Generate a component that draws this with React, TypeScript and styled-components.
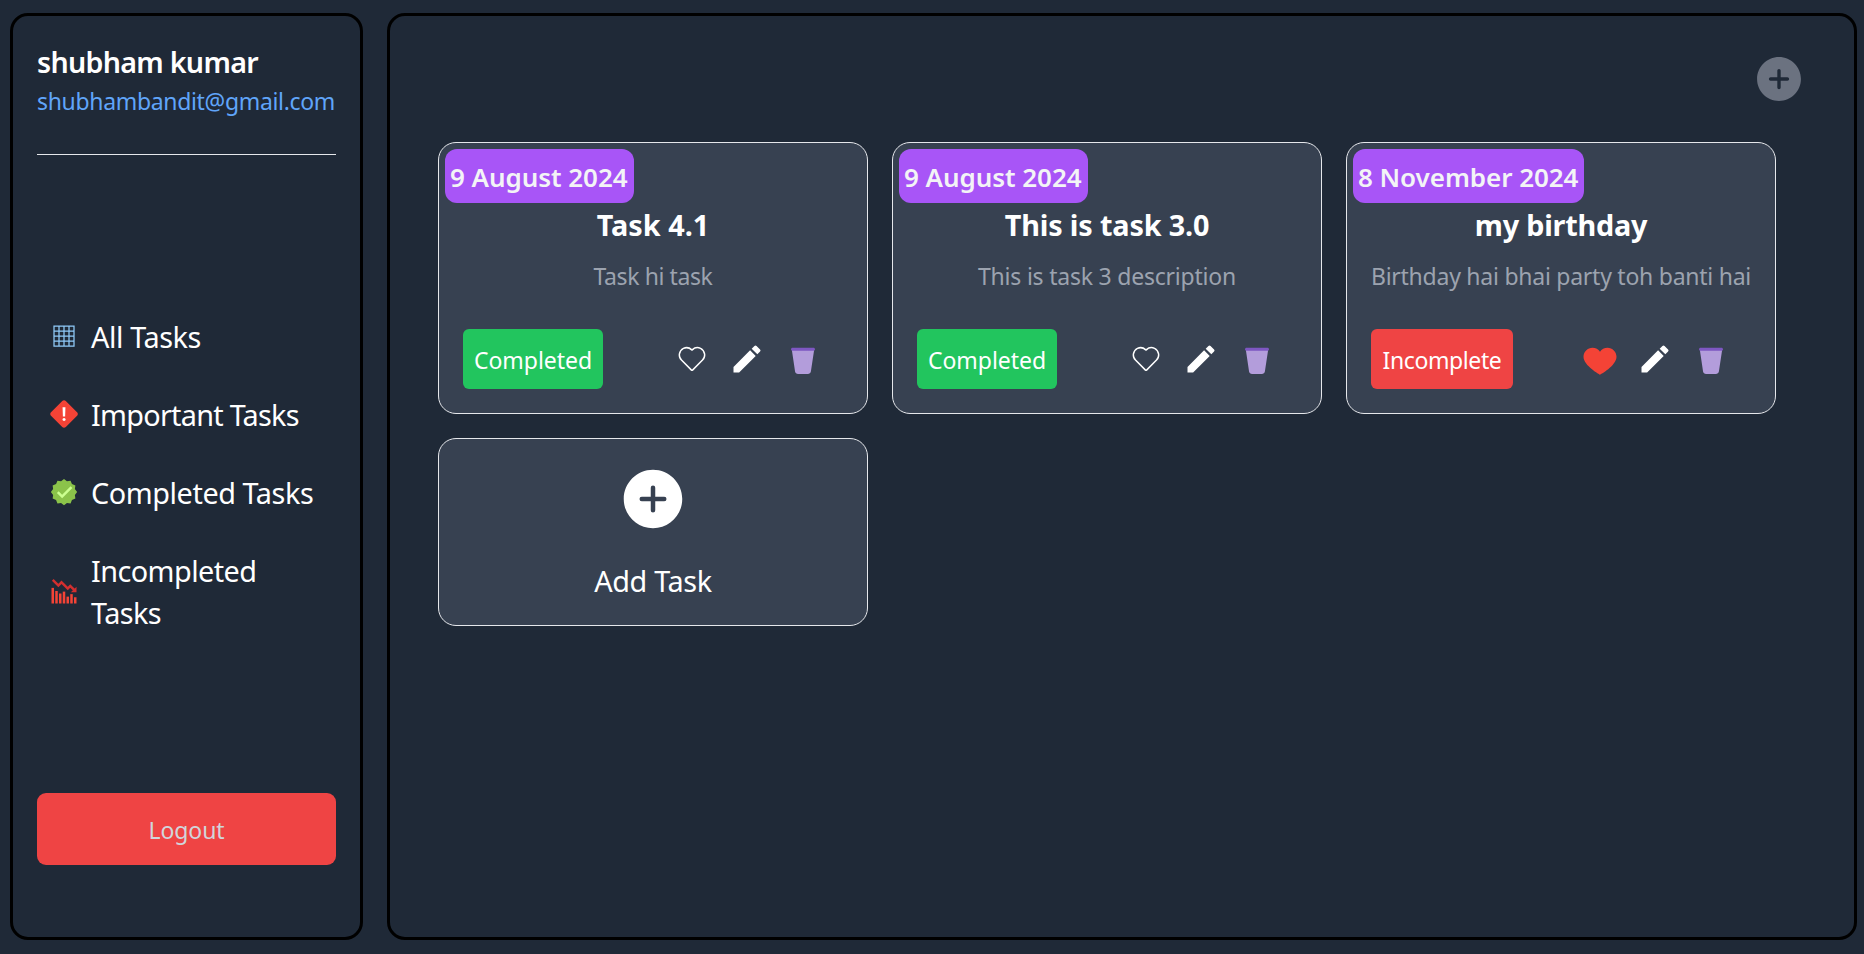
import React from "react";
import styled, { createGlobalStyle } from "styled-components";
import type { IconType } from "react-icons";
import { FcApproval, FcBearish, FcEmptyTrash, FcGrid, FcHighPriority, FcLike } from "react-icons/fc";
import { CiHeart } from "react-icons/ci";
import { MdEdit } from "react-icons/md";
import { IoAddCircle } from "react-icons/io5";

const GlobalStyle = createGlobalStyle`
  *, *::before, *::after { box-sizing: border-box; }
  body {
    margin: 0;
    background: #1f2937;
    color: #ffffff;
    font-family: "Segoe UI", "Noto Sans", sans-serif;
  }
  h1, h2, p { margin: 0; }
  button { font: inherit; color: inherit; border: 0; background: none; padding: 0; cursor: pointer; }
  svg { display: block; flex-shrink: 0; }
`;

const Page = styled.div`
  display: flex;
  gap: 24px;
  height: 954px;
  padding: 13px 7px 14px 10px;
`;

const Panel = styled.section`
  border: 3px solid #000000;
  border-radius: 18px;
`;

const Sidebar = styled(Panel)`
  display: flex;
  flex-direction: column;
  flex: none;
  width: 353px;
  padding: 24px 24px 72px;
`;

const UserName = styled.h1`
  font-size: 28.6px;
  font-weight: 600;
  line-height: 43px;
  letter-spacing: -0.7px;
  white-space: nowrap;
`;

const UserEmail = styled.p`
  color: #60a5fa;
  font-size: 23px;
  line-height: 36px;
  letter-spacing: -0.33px;
  white-space: nowrap;
`;

const Divider = styled.div`
  height: 1px;
  margin-top: 35px;
  background: #e5e7eb;
`;

const Nav = styled.nav`
  margin-top: 142px;
`;

const NavItem = styled.a<{ $tracking: number }>`
  display: flex;
  align-items: center;
  gap: 12px;
  padding: 19px 12px 17px;
  font-size: 28.8px;
  line-height: 42px;
  letter-spacing: ${(p) => p.$tracking}px;
  cursor: pointer;

  svg { margin-bottom: 2px; }
`;

const LogoutButton = styled.button`
  height: 72px;
  margin-top: auto;
  padding-top: 2px;
  border-radius: 9px;
  background: #ef4444;
  color: #d1d5db;
  font-size: 23px;
  letter-spacing: -0.1px;
`;

const Main = styled(Panel)`
  flex: 1;
  padding: 36px 48px;
`;

const Header = styled.header`
  display: flex;
  justify-content: flex-end;
  color: #6b7280;
`;

const TaskGrid = styled.div`
  display: grid;
  grid-template-columns: repeat(3, 430px);
  align-items: start;
  gap: 24px;
  margin-top: 36px;
`;

const Card = styled.article`
  position: relative;
  display: flex;
  flex-direction: column;
  padding: 61px 24px 24px;
  border: 1px solid #e5e7eb;
  border-radius: 18px;
  background: #374151;
`;

const DateBadge = styled.span`
  position: absolute;
  top: 6px;
  left: 6px;
  height: 54px;
  padding: 2px 6px 0 5px;
  border-radius: 12px;
  background: #a855f7;
  color: #f3f4f6;
  font-size: 26px;
  font-weight: 600;
  line-height: 52px;
  letter-spacing: -0.05px;
  white-space: nowrap;
`;

const TaskTitle = styled.h2<{ $tracking: number }>`
  font-size: 28.8px;
  font-weight: 700;
  line-height: 42px;
  letter-spacing: ${(p) => p.$tracking}px;
  text-align: center;
`;

const TaskText = styled.p<{ $tracking: number }>`
  margin: 12px -10px 0;
  color: #9ca3af;
  font-size: 23px;
  line-height: 36px;
  letter-spacing: ${(p) => p.$tracking}px;
  text-align: center;
  white-space: nowrap;
`;

const CardFooter = styled.footer`
  display: flex;
  align-items: center;
  justify-content: space-between;
  margin-top: 35px;
`;

const StatusButton = styled.button<{ $done: boolean }>`
  width: ${(p) => (p.$done ? 140 : 142)}px;
  height: 60px;
  padding-top: 2px;
  border-radius: 6px;
  background: ${(p) => (p.$done ? "#22c55e" : "#ef4444")};
  font-size: 23px;
  letter-spacing: ${(p) => (p.$done ? -0.05 : -0.4)}px;
`;

const Actions = styled.div`
  display: grid;
  grid-template-columns: 55px 56px 36px;
  margin-right: 22px;
`;

const AddCard = styled.button`
  display: flex;
  flex-direction: column;
  align-items: center;
  gap: 25px;
  padding: 24px 24px 23px;
  border: 1px solid #e5e7eb;
  border-radius: 18px;
  background: #374151;
  font-size: 28.8px;
  line-height: 42px;
  letter-spacing: -0.33px;
`;

interface NavEntry {
  label: string;
  icon: IconType;
  tracking: number;
}

const navEntries: NavEntry[] = [
  { label: "All Tasks", icon: FcGrid, tracking: -0.4 },
  { label: "Important Tasks", icon: FcHighPriority, tracking: -0.73 },
  { label: "Completed Tasks", icon: FcApproval, tracking: -0.42 },
  { label: "Incompleted Tasks", icon: FcBearish, tracking: -0.55 },
];

interface Task {
  date: string;
  title: string;
  text: string;
  done: boolean;
  important: boolean;
  tracking: { title: number; text: number };
}

const tasks: Task[] = [
  {
    date: "9 August 2024",
    title: "Task 4.1",
    text: "Task hi task",
    done: true,
    important: false,
    tracking: { title: 0, text: -0.4 },
  },
  {
    date: "9 August 2024",
    title: "This is task 3.0",
    text: "This is task 3 description",
    done: true,
    important: false,
    tracking: { title: -0.15, text: -0.22 },
  },
  {
    date: "8 November 2024",
    title: "my birthday",
    text: "Birthday hai bhai party toh banti hai",
    done: false,
    important: true,
    tracking: { title: -0.23, text: -0.25 },
  },
];

function TaskCard({ task }: { task: Task }) {
  return (
    <Card>
      <DateBadge>{task.date}</DateBadge>
      <TaskTitle $tracking={task.tracking.title}>{task.title}</TaskTitle>
      <TaskText $tracking={task.tracking.text}>{task.text}</TaskText>
      <CardFooter>
        <StatusButton $done={task.done}>{task.done ? "Completed" : "Incomplete"}</StatusButton>
        <Actions>
          <button aria-label="Important">{task.important ? <FcLike size={36} /> : <CiHeart size={36} />}</button>
          <button aria-label="Edit"><MdEdit size={36} /></button>
          <button aria-label="Delete"><FcEmptyTrash size={36} /></button>
        </Actions>
      </CardFooter>
    </Card>
  );
}

export default function App() {
  return (
    <>
      <GlobalStyle />
      <Page>
        <Sidebar as="aside">
          <UserName>shubham kumar</UserName>
          <UserEmail>shubhambandit@gmail.com</UserEmail>
          <Divider />
          <Nav>
            {navEntries.map(({ label, icon: Icon, tracking }) => (
              <NavItem key={label} $tracking={tracking}>
                <Icon size={30} />
                {label}
              </NavItem>
            ))}
          </Nav>
          <LogoutButton>Logout</LogoutButton>
        </Sidebar>
        <Main as="main">
          <Header>
            <button aria-label="New task"><IoAddCircle size={54} /></button>
          </Header>
          <TaskGrid>
            {tasks.map((task) => (
              <TaskCard key={task.title} task={task} />
            ))}
            <AddCard>
              <IoAddCircle size={72} />
              Add Task
            </AddCard>
          </TaskGrid>
        </Main>
      </Page>
    </>
  );
}
